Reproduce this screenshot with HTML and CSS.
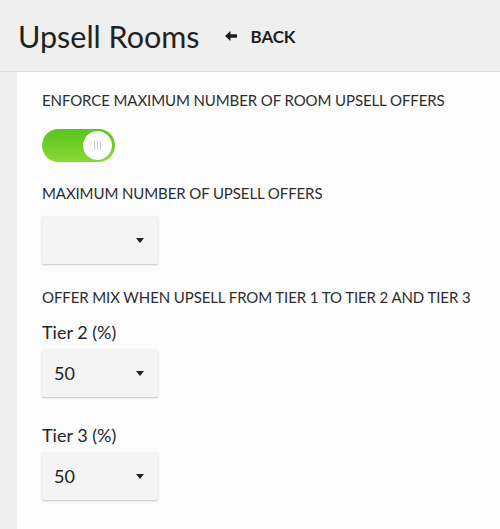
FILE: index.html
```html
<!DOCTYPE html>
<html>
<head>
<meta charset="utf-8">
<link rel="stylesheet" href="styles.css">
</head>
<body>
<header class="topbar">
  <h1 class="title">Upsell Rooms</h1>
  <a class="back" href="#">
    <svg class="back-icon" width="12" height="10" viewBox="0 0 12 10"><path d="M0 5 L5.5 0 L5.5 3.2 L12 3.2 L12 6.8 L5.5 6.8 L5.5 10 Z" fill="#1e1e1e"/></svg>
    <span>BACK</span>
  </a>
</header>
<main class="panel">
  <div class="label caps l1">ENFORCE MAXIMUM NUMBER OF ROOM UPSELL OFFERS</div>
  <div class="toggle"><div class="knob"><span></span><span></span><span></span></div></div>
  <div class="label caps l2">MAXIMUM NUMBER OF UPSELL OFFERS</div>
  <div class="select s1"><span class="val"></span><span class="caret"></span></div>
  <div class="label caps l3">OFFER MIX WHEN UPSELL FROM TIER 1 TO TIER 2 AND TIER 3</div>
  <div class="label tier t2">Tier 2 (%)</div>
  <div class="select s2"><span class="val">50</span><span class="caret"></span></div>
  <div class="label tier t3">Tier 3 (%)</div>
  <div class="select s3"><span class="val">50</span><span class="caret"></span></div>
</main>
</body>
</html>
```
FILE: styles.css
```css
* { box-sizing: border-box; }
html, body { margin: 0; padding: 0; }
body {
  width: 500px;
  height: 529px;
  overflow: hidden;
  background: #efefef;
  font-family: Lato, "Open Sans", sans-serif;
  color: #2a2a2a;
  display: flex;
  flex-direction: column;
}
.topbar {
  height: 72px;
  flex: none;
  display: flex;
  align-items: center;
  padding-left: 18px;
  border-bottom: 1px solid #dcdcdc;
  background: #efefef;
}
.title {
  margin: 0;
  font-weight: 400;
  font-size: 30.5px;
  line-height: 36px;
  color: #222;
}
.back {
  margin-left: 25px;
  margin-top: 1px;
  display: flex;
  align-items: center;
  text-decoration: none;
  color: #1e1e1e;
  font-weight: 700;
  font-size: 17px;
  letter-spacing: -0.2px;
}
.back-icon { margin-right: 14px; }
.panel {
  flex: 1;
  margin-left: 17px;
  background: #fcfcfc;
  padding: 18px 0 0 25px;
  display: flex;
  flex-direction: column;
  align-items: flex-start;
}
.label { white-space: nowrap; }
.caps { font-size: 15px; line-height: 20px; color: #2e2e2e; letter-spacing: -0.1px; }
.tier { font-size: 18px; line-height: 24px; color: #262626; }
.toggle {
  margin-top: 19px;
  width: 73px;
  height: 33px;
  border-radius: 17px;
  background: linear-gradient(#57c41c, #8bd836);
  display: flex;
  justify-content: flex-end;
  align-items: center;
  padding-right: 3px;
}
.knob {
  width: 29px;
  height: 29px;
  border-radius: 50%;
  background: radial-gradient(circle at 50% 40%, #ffffff 55%, #ececec 100%);
  box-shadow: 0 0 1px rgba(0,0,0,0.2);
  display: flex;
  justify-content: center;
  align-items: center;
  gap: 2px;
}
.knob span { width: 1px; height: 9px; background: #c8c8c8; }
.l2 { margin-top: 21px; }
.select {
  width: 116px;
  height: 48px;
  background: #f4f4f4;
  border-radius: 2px;
  box-shadow: 0 1px 2px rgba(0,0,0,0.22);
  display: flex;
  align-items: center;
  justify-content: space-between;
  padding: 0 14px 0 12px;
  font-size: 18px;
  color: #222;
}
.caret {
  width: 0; height: 0;
  border-left: 4px solid transparent;
  border-right: 4px solid transparent;
  border-top: 5px solid #222;
}
.s1 { margin-top: 13px; }
.l3 { margin-top: 23px; }
.t2 { margin-top: 13px; }
.s2 { margin-top: 5px; }
.t3 { margin-top: 26px; }
.s3 { margin-top: 5px; }
```
